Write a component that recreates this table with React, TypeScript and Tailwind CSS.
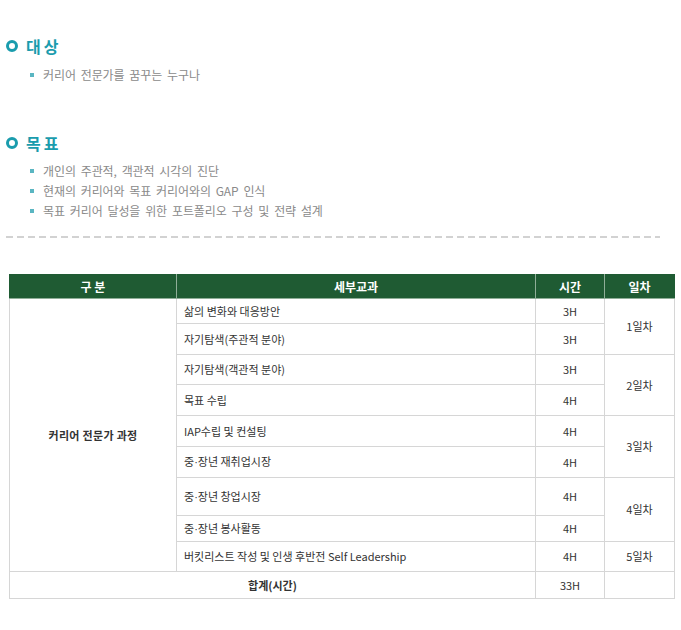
import { Fragment } from "react";

type Lesson = {
  title: string;
  hours: string;
  height: string;
  day?: string;
  daySpan?: number;
};

const lessons: Lesson[] = [
  { title: "삶의 변화와 대응방안", hours: "3H", height: "h-[25px]", day: "1일차", daySpan: 2 },
  { title: "자기탐색(주관적 분야)", hours: "3H", height: "h-[31px]" },
  { title: "자기탐색(객관적 분야)", hours: "3H", height: "h-[30px]", day: "2일차", daySpan: 2 },
  { title: "목표 수립", hours: "4H", height: "h-[31px]" },
  { title: "IAP수립 및 컨설팅", hours: "4H", height: "h-[31px]", day: "3일차", daySpan: 2 },
  { title: "중·장년 재취업시장", hours: "4H", height: "h-[31px]" },
  { title: "중·장년 창업시장", hours: "4H", height: "h-[38px]", day: "4일차", daySpan: 2 },
  { title: "중·장년 봉사활동", hours: "4H", height: "h-[26px]" },
  { title: "버킷리스트 작성 및 인생 후반전 Self Leadership", hours: "4H", height: "h-[30px]", day: "5일차", daySpan: 1 },
];

// the middle dot in the CJK font is full width, the source uses a narrow one
function Title({ text }: { text: string }) {
  const parts = text.split("·");
  return (
    <>
      {parts.map((p, i) => (
        <Fragment key={i}>
          {i > 0 && <span className="font-['Liberation_Sans',sans-serif]">·</span>}
          {p}
        </Fragment>
      ))}
    </>
  );
}

function Heading({ label }: { label: string }) {
  return (
    <div className="flex items-center h-[20px]">
      <span className="w-[12px] h-[12px] rounded-full border-[3px] border-[#1a9cad]" />
      <h2 className="ml-[8px] text-[16px] leading-[20px] font-bold text-[#1a9cad] tracking-[3px]">
        {label}
      </h2>
    </div>
  );
}

function Bullets({ items }: { items: string[] }) {
  return (
    <ul className="pl-[24px]">
      {items.map((item) => (
        <li
          key={item}
          className="flex items-center h-[20px] text-[12px] text-[#8a8a8a] tracking-[-0.1px] [word-spacing:2.3px]"
        >
          <span className="w-[4px] h-[4px] bg-[#5ab6c2] mr-[9px]" />
          {item}
        </li>
      ))}
    </ul>
  );
}

const cell = "border border-[#d6d6d6]";

export default function App() {
  return (
    <div className="w-[681px] h-[630px] bg-white font-['Noto_Sans_CJK_KR','Noto_Sans',sans-serif] overflow-hidden">
      <div className="pt-[36px] pl-[6px]">
        <Heading label="대상" />
        <div className="mt-[9px]">
          <Bullets items={["커리어 전문가를 꿈꾸는 누구나"]} />
        </div>

        <div className="mt-[48px]">
          <Heading label="목표" />
        </div>
        <div className="mt-[8px]">
          <Bullets
            items={[
              "개인의 주관적, 객관적 시각의 진단",
              "현재의 커리어와 목표 커리어와의 GAP 인식",
              "목표 커리어 달성을 위한 포트폴리오 구성 및 전략 설계",
            ]}
          />
        </div>

        <div className="mt-[15px] w-[654px] h-[2px] bg-[repeating-linear-gradient(to_right,#d2d2d2_0_7px,transparent_7px_11px)]" />
      </div>

      <table className="mt-[36px] ml-[9px] w-[665px] border-collapse table-fixed text-[11px] text-[#333]">
        <colgroup>
          <col className="w-[167px]" />
          <col className="w-[359px]" />
          <col className="w-[69px]" />
          <col className="w-[70px]" />
        </colgroup>
        <thead>
          <tr className="h-[24px] bg-[#1f5b33] text-white text-[12px] font-bold">
            <th className="border border-[#8fae98] border-t-[#1f5b33] border-l-[#1f5b33]">구 분</th>
            <th className="border border-[#8fae98] border-t-[#1f5b33]">세부교과</th>
            <th className="border border-[#8fae98] border-t-[#1f5b33]">시간</th>
            <th className="border border-[#8fae98] border-t-[#1f5b33] border-r-[#1f5b33]">일차</th>
          </tr>
        </thead>
        <tbody>
          {lessons.map((row, i) => (
            <tr key={row.title} className={row.height}>
              {i === 0 && (
                <td rowSpan={lessons.length} className={`${cell} text-center font-bold tracking-[0.3px]`}>
                  커리어 전문가 과정
                </td>
              )}
              <td className={`${cell} pl-[7px]`}>
                <Title text={row.title} />
              </td>
              <td className={`${cell} text-center`}>{row.hours}</td>
              {row.day && (
                <td rowSpan={row.daySpan} className={`${cell} text-center`}>
                  {row.day}
                </td>
              )}
            </tr>
          ))}
          <tr className="h-[27px]">
            <td colSpan={2} className={`${cell} text-center font-bold`}>
              합계(시간)
            </td>
            <td className={`${cell} text-center`}>33H</td>
            <td className={cell} />
          </tr>
        </tbody>
      </table>
    </div>
  );
}
